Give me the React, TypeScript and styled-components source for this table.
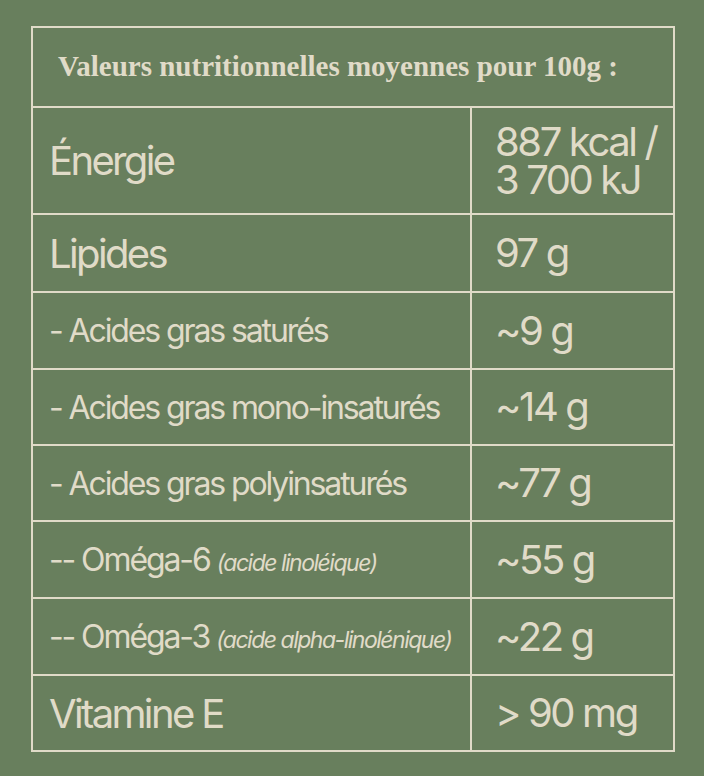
import styled, { createGlobalStyle } from "styled-components";

const cream = "#e0dbc8";
const green = "#687f5d";

const GlobalStyle = createGlobalStyle`
    body {
        margin: 0;
        background-color: ${green};
        font-family: "Inter", "Liberation Sans", sans-serif;
        color: ${cream};
    }
`;

type Row = {
    label: string
    note?: string
    value: string
    small?: boolean
    height: number
};

const rows: Row[] = [
    { label: "Énergie", value: "887 kcal /\n3 700 kJ", height: 105 },
    { label: "Lipides", value: "97 g", height: 76 },
    { label: "- Acides gras saturés", value: "~9 g", small: true, height: 75 },
    { label: "- Acides gras mono-insaturés", value: "~14 g", small: true, height: 74 },
    { label: "- Acides gras polyinsaturés", value: "~77 g", small: true, height: 74 },
    { label: "-- Oméga-6", note: "(acide linoléique)", value: "~55 g", small: true, height: 75 },
    { label: "-- Oméga-3", note: "(acide alpha-linolénique)", value: "~22 g", small: true, height: 75 },
    { label: "Vitamine E", value: "> 90 mg", height: 74 },
];

export default function App() {
    return (
        <Page>
            <GlobalStyle />
            <Table>
                <Header>Valeurs nutritionnelles moyennes pour 100g :</Header>
                {rows.map((r) => (
                    <TableRow key={r.label} $height={r.height}>
                        <Label $small={r.small}>
                            <span>
                                {r.label}
                                {r.note && <Note>{r.note}</Note>}
                            </span>
                        </Label>
                        <Value>
                            <span>{r.value}</span>
                        </Value>
                    </TableRow>
                ))}
            </Table>
        </Page>
    );
}

const Page = styled.div`
    padding: 26px 29px 26px 31px;
`

const Table = styled.div`
    width: 644px;
    box-sizing: border-box;
    border: 2px solid ${cream};
`

const Header = styled.div`
    height: 78px;
    display: flex;
    align-items: center;
    padding: 0 24px 2px 25px;
    box-sizing: border-box;
    font-family: "Liberation Serif", "DejaVu Serif", serif;
    font-weight: 700;
    font-size: 29px;
`

const TableRow = styled.div<{ $height: number }>`
    display: grid;
    grid-template-columns: 439px 1fr;
    min-height: ${(p) => p.$height}px;
    border-top: 2px solid ${cream};
`

const Label = styled.div<{ $small?: boolean }>`
    display: flex;
    align-items: center;
    padding: 0 16px;
    border-right: 2px solid ${cream};
    font-size: ${(p) => (p.$small ? "32px" : "40px")};
    letter-spacing: -0.066em;
    white-space: nowrap;
`

const Note = styled.span`
    margin-left: 7px;
    font-style: italic;
    font-size: 23px;
    letter-spacing: -0.065em;
`

const Value = styled.div`
    display: flex;
    align-items: center;
    padding: 0 23px;
    font-size: 40px;
    line-height: 38px;
    letter-spacing: -0.06em;
    white-space: pre;
`
